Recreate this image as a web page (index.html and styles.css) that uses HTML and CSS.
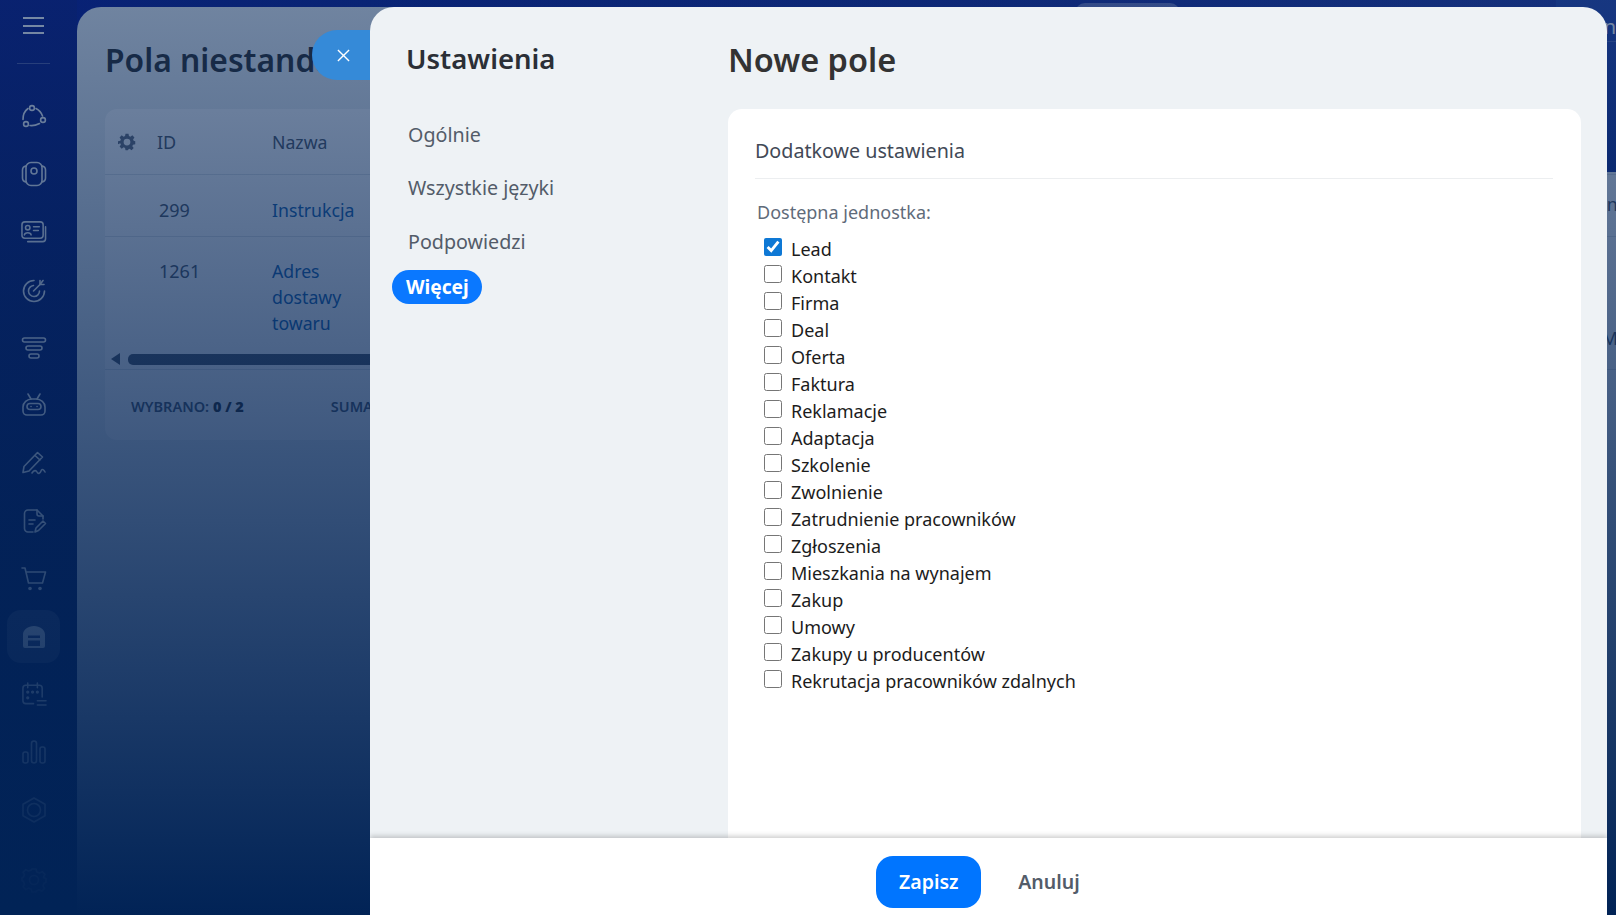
FILE: index.html
```html
<!DOCTYPE html>
<html lang="pl">
<head>
<meta charset="UTF-8" />
<meta name="viewport" content="width=device-width, initial-scale=1" />
<title>Nowe pole</title>
<link rel="stylesheet" href="styles.css">
</head>
<body>

<div class="page">
  <nav class="sidebar">
    <div class="burger"><i></i><i></i><i></i></div>
    <div class="side-rule"></div>
    <div class="side-icons">
      <a class="side-item"><svg viewBox="0 0 26 26"><circle cx="11" cy="4" r="2.4"/><circle cx="5" cy="20" r="2.4"/><circle cx="22" cy="16" r="2.4"/><path d="M7 4.500C3.500 7 2 11 2 15.500M15 4.500C18 6 20.500 9 21.500 12M9 21.500C12.500 22 15.500 21 18.500 19.500"/></svg></a>
      <a class="side-item"><svg viewBox="0 0 26 26"><rect x="5" y="1.500" width="16" height="23" rx="5"/><circle cx="13" cy="10" r="3"/><path d="M5 5C2.500 5.500 1.500 7 1.500 9v8c0 2 1 3.500 3.500 4M21 5c2.500.5 3.500 2 3.500 4v8c0 2-1 3.500-3.500 4"/></svg></a>
      <a class="side-item"><svg viewBox="0 0 27 26"><rect x="1" y="2.500" width="22" height="17" rx="3"/><circle cx="7" cy="8.500" r="2.300"/><path d="M3.500 16c.5-3 6.500-3 7 0M13 7.500h6M13 11.500h5M25.500 7.500v12.500a3 3 0 0 1-3 3H7"/></svg></a>
      <a class="side-item"><svg viewBox="0 0 26 26"><path d="M13 3.500A10.500 10.500 0 1 0 23.500 14"/><path d="M12.500 8.500A5.500 5.500 0 1 0 18.500 14"/><path d="M12.500 14l7-7M19 3.500v4h4"/><path d="M19 7.500l3-4"/></svg></a>
      <a class="side-item"><svg viewBox="0 0 26 26"><rect x="1.500" y="3" width="23" height="4" rx="2"/><rect x="5" y="11" width="16" height="4" rx="2"/><rect x="8" y="19" width="10" height="4" rx="2"/></svg></a>
      <a class="side-item"><svg viewBox="0 0 26 26"><path d="M7 2l3 5M19 2l-3 5"/><path d="M2 15a9 8 0 0 1 9-8h4a9 8 0 0 1 9 8v4a4 4 0 0 1-4 4H6a4 4 0 0 1-4-4z"/><rect x="6" y="11.500" width="14" height="6" rx="3"/><path d="M10 14.500h.1M16 14.500h.1"/></svg></a>
      <a class="side-item"><svg viewBox="0 0 26 26"><path d="M3 16.500L16.500 2.500l5 4.500L8 21l-6 1.500zM14 5.500l5 4.500"/><path d="M11 23c2-3 4-3 5-1s3 2 4-1 3-1 4 1"/></svg></a>
      <a class="side-item"><svg viewBox="0 0 26 26"><path d="M12 24H7a3.500 3.500 0 0 1-3.500-3.500v-15A3.500 3.500 0 0 1 7 2h9l6 6v3"/><path d="M16 2v4a2 2 0 0 0 2 2h4M8 12h6M8 16h4M14 24l1-4 7-7 2.500 2.500-7 7z"/></svg></a>
      <a class="side-item"><svg viewBox="0 0 26 26"><path d="M1 2h3l3.500 15h14L24.500 6H5"/><circle cx="9" cy="22.500" r="1.800" class="solid"/><circle cx="19" cy="22.500" r="1.800" class="solid"/></svg></a>
      <a class="side-item active"><svg viewBox="0 0 26 26"><path class="solid" d="M2 10.500C2 6 7 2 13 2s11 4 11 8.500V22a2 2 0 0 1-2 2H4a2 2 0 0 1-2-2zM7 11.500v2.500h12v-2.500zM7 16.500V22h12v-5.500z"/></svg></a>
      <a class="side-item"><svg viewBox="0 0 27 26"><path d="M13 23H5a3 3 0 0 1-3-3V7a3 3 0 0 1 3-3h14a3 3 0 0 1 3 3v9M7 1.500v5M17 1.500v5M17 20h9M17 24.500h9"/><circle cx="7" cy="11" r=".9"/><circle cx="12" cy="11" r=".9"/><circle cx="17" cy="11" r=".9"/><circle cx="7" cy="17" r=".9"/></svg></a>
      <a class="side-item"><svg viewBox="0 0 26 26"><rect x="2" y="13" width="5" height="11" rx="2"/><rect x="10.500" y="2" width="5" height="22" rx="2.500"/><rect x="19" y="8" width="5" height="16" rx="2"/></svg></a>
      <a class="side-item"><svg viewBox="0 0 26 26"><path d="M13 1l11 6.200v11.600L13 25 2 18.800V7.200z"/><circle cx="13" cy="13" r="6.500"/></svg></a>
      <a class="side-item gear"><svg viewBox="0 0 26 26"><path d="M11 2h4l.8 3 2.700 1.100 2.700-1.500 2.800 2.800-1.500 2.700L23 10.800l2 1v3.400l-2 1-1 2.600 1.500 2.700-2.800 2.800-2.700-1.500-2.700 1.100L15 25h-4l-.8-2.800-2.700-1.100-2.700 1.500L2 19.800l1.500-2.700-1-2.600-1.500-1V11l1.500-1 1-2.400L2 5.400l2.800-2.800 2.700 1.500 2.700-1.100z"/><circle cx="13" cy="13" r="4.500"/></svg></a>
    </div>
  </nav>

  <main class="content">
    <h2 class="content-title">Pola niestandardowe</h2>
    <section class="table-card">
      <div class="t-row t-head">
        <svg class="cog" viewBox="0 0 24 24"><path d="M10 1h4l.6 3.100 1.900.8 2.600-1.800 2.800 2.800-1.800 2.600.8 1.900L23 11v4l-3.100.6-.8 1.900 1.800 2.600-2.800 2.800-2.600-1.800-1.900.8L13 23h-3l-.6-3.100-1.900-.8-2.600 1.800-2.800-2.800 1.800-2.600-.8-1.900L0 15v-4l3.100-.6.800-1.900-1.800-2.600 2.800-2.800 2.600 1.800 1.900-.8zM12 7.500a4.500 4.500 0 1 0 0 9 4.500 4.500 0 0 0 0-9z" fill-rule="evenodd"/></svg>
        <span class="c-id">ID</span><span class="c-name">Nazwa</span>
      </div>
      <div class="t-row t-body">
        <span class="c-id num">299</span><a class="c-name">Instrukcja</a>
      </div>
      <div class="t-row t-last">
        <span class="c-id num">1261</span><a class="c-name">Adres dostawy towaru</a>
      </div>
      <div class="t-scroll"><i class="arrow"></i><i class="thumb"></i></div>
      <div class="t-foot"><span>WYBRANO: <b>0 / 2</b></span><span class="suma">SUMA</span></div>
    </section>
  </main>

  <div class="top-widget"><span class="tab"></span><span class="corner-text">in</span></div>
  <span class="peek peek-a">tin</span>
  <span class="peek peek-b">M</span>
</div>

<div class="overlay"></div>

<a class="close-tab"><svg viewBox="0 0 14 14"><path d="M1 1l12 12M13 1L1 13"/></svg></a>

<aside class="slider">
  <div class="slider-body">
    <div class="slider-nav">
      <h2>Ustawienia</h2>
      <a>Ogólnie</a>
      <a>Wszystkie języki</a>
      <a>Podpowiedzi</a>
      <a class="current">Więcej</a>
    </div>
    <div class="slider-main">
      <h1>Nowe pole</h1>
      <div class="form-card">
        <div class="form-title">Dodatkowe ustawienia</div>
        <div class="form-label">Dostępna jednostka:</div>
        <label class="check"><input type="checkbox" checked><span>Lead</span></label>
        <label class="check"><input type="checkbox"><span>Kontakt</span></label>
        <label class="check"><input type="checkbox"><span>Firma</span></label>
        <label class="check"><input type="checkbox"><span>Deal</span></label>
        <label class="check"><input type="checkbox"><span>Oferta</span></label>
        <label class="check"><input type="checkbox"><span>Faktura</span></label>
        <label class="check"><input type="checkbox"><span>Reklamacje</span></label>
        <label class="check"><input type="checkbox"><span>Adaptacja</span></label>
        <label class="check"><input type="checkbox"><span>Szkolenie</span></label>
        <label class="check"><input type="checkbox"><span>Zwolnienie</span></label>
        <label class="check"><input type="checkbox"><span>Zatrudnienie pracowników</span></label>
        <label class="check"><input type="checkbox"><span>Zgłoszenia</span></label>
        <label class="check"><input type="checkbox"><span>Mieszkania na wynajem</span></label>
        <label class="check"><input type="checkbox"><span>Zakup</span></label>
        <label class="check"><input type="checkbox"><span>Umowy</span></label>
        <label class="check"><input type="checkbox"><span>Zakupy u producentów</span></label>
        <label class="check"><input type="checkbox"><span>Rekrutacja pracowników zdalnych</span></label>
      </div>
    </div>
  </div>
  <footer class="slider-foot">
    <button class="btn-save">Zapisz</button>
    <button class="btn-cancel">Anuluj</button>
  </footer>
</aside>

</body>
</html>
```

FILE: styles.css
```css
* {
  box-sizing: border-box;
}
html, body {
  height: 100%;
}
body {
  margin: 0;
  overflow: hidden;
  font-family: "Noto Sans", "Open Sans", sans-serif;
  background: #12288e;
  color: #333;
}
a {
  text-decoration: none;
}

/* page under the slider */
.page {
  display: flex;
  height: 915px;
  background: linear-gradient(90deg, #0f1f96 0%, #1c2f9c 60%, #2b40a6 100%);
}
.sidebar {
  width: 77px;
  flex-shrink: 0;
  padding-right: 10px;
  color: #fff;
  background: linear-gradient(#12208c, #0a1c5c 60%);
}
.burger {
  display: flex;
  flex-direction: column;
  gap: 5.500px;
  width: 21px;
  margin: 17px auto 0;
}
.burger i {
  display: block;
  height: 2px;
  background: #fff;
}
.side-rule {
  width: 33px;
  height: 1px;
  margin: 29px auto 0;
  background: rgba(255,255,255,.3);
}
.side-icons {
  display: flex;
  flex-direction: column;
  align-items: center;
  margin-top: 26px;
  gap: 4.800px;
}
.side-item {
  display: flex;
  align-items: center;
  justify-content: center;
  width: 53px;
  height: 53px;
  border-radius: 14px;
}
.side-item svg {
  width: 26px;
  height: 26px;
  fill: none;
  stroke: currentColor;
  stroke-width: 1.600;
  stroke-linecap: round;
  stroke-linejoin: round;
}
.side-item .solid {
  fill: currentColor;
  stroke: none;
}
.side-item.active {
  background: rgba(255,255,255,.2);
}
.side-item.gear {
  margin-top: 12px;
}
.content {
  flex: 1;
  min-width: 0;
  margin-top: 7px;
  padding: 30px 0 0 28px;
  border-radius: 24px 0 0 0;
  background: #eef2f4;
  overflow: hidden;
}
.content-title {
  margin: 0 0 26px;
  font-size: 31.800px;
  line-height: 46px;
  font-weight: 600;
  white-space: nowrap;
  color: #333;
}
.table-card {
  width: 1600px;
  background: #fff;
  border-radius: 12px;
  font-size: 18px;
  color: #535c69;
}
.t-row {
  display: flex;
  align-items: center;
  height: 62px;
  border-bottom: 1px solid #dfe3e8;
}
.t-head {
  position: relative;
  height: 66px;
}
.t-body {
  padding-top: 9px;
}
.cog {
  position: absolute;
  left: 13px;
  top: 24px;
  width: 18px;
  height: 18px;
  fill: #6b7280;
}
.c-id {
  margin-left: 52px;
  width: 115px;
  line-height: 26px;
}
.c-id.num {
  margin-left: 54px;
  width: 113px;
}
.c-name {
  width: 90px;
  line-height: 26px;
  font-size: 17.700px;
  color: #2067b0;
}
.t-head .c-name {
  color: #535c69;
}
.t-last {
  align-items: flex-start;
  height: 113px;
  padding-top: 21px;
  border-bottom: 0;
}
.t-scroll {
  display: flex;
  align-items: center;
  gap: 8px;
  height: 14px;
  padding-left: 6px;
  margin-top: 2px;
}
.arrow {
  width: 0;
  height: 0;
  border-style: solid;
  border-width: 6px 9px 6px 0;
  border-color: transparent #535c69 transparent transparent;
}
.thumb {
  display: block;
  width: 1400px;
  height: 11px;
  border-radius: 5px;
  background: #535c69;
}
.t-foot {
  display: flex;
  align-items: center;
  height: 71px;
  margin-top: 3px;
  padding: 1px 0 0 26px;
  border-top: 1px solid #dfe3e8;
  font-size: 14.500px;
  font-weight: 600;
}
.t-foot b {
  color: #333;
}
.suma {
  margin-left: 87px;
}
.top-widget {
  position: absolute;
  top: 0;
  right: 0;
  width: 60px;
  height: 172px;
  border-top: 12px solid #2f4cb0;
  background: linear-gradient(#2f4cb0, #1a349c);
  color: #fff;
  font-size: 20px;
  line-height: 30px;
}
.corner-text {
  position: absolute;
  right: 0;
  top: 0;
  height: 30px;
  padding-left: 4px;
  border-bottom: 1px solid rgba(255,255,255,.2);
  width: 100%;
  text-align: right;
}
.tab {
  position: absolute;
  top: -9px;
  right: 436px;
  width: 105px;
  height: 20px;
  border-radius: 10px 10px 0 0;
  background: rgba(255,255,255,.35);
}
.peek {
  position: absolute;
  right: -2px;
  font-size: 18px;
  color: #535c69;
}
.peek-a {
  top: 192px;
}
.peek-b {
  top: 326px;
}

.overlay {
  position: absolute;
  inset: 0;
  background: linear-gradient(rgba(1,35,86,.53), rgba(1,35,86,1));
}

.close-tab {
  position: absolute;
  left: 312px;
  top: 30px;
  display: flex;
  align-items: center;
  width: 70px;
  height: 50px;
  padding-left: 25px;
  border-radius: 25px 0 0 25px;
  background: #358ad8;
}
.close-tab svg {
  width: 13px;
  height: 13px;
  fill: none;
  stroke: #fff;
  stroke-width: 1.500;
}

/* slider */
.slider {
  position: absolute;
  left: 370px;
  top: 7px;
  bottom: 0;
  width: 1237px;
  display: flex;
  flex-direction: column;
  border-radius: 24px 24px 0 0;
  background: #eef2f5;
  overflow: hidden;
}
.slider-body {
  flex: 1;
  min-height: 0;
  display: flex;
  overflow: hidden;
}
.slider-nav {
  display: flex;
  flex-direction: column;
  align-items: flex-start;
  width: 358px;
  flex-shrink: 0;
  padding: 34px 0 0 22px;
}
.slider-nav h2 {
  margin: 0 0 41px 14px;
  font-size: 27.500px;
  line-height: 36px;
  font-weight: 600;
  color: #2b2f36;
}
.slider-nav a {
  padding: 0 14px 0 16px;
  margin-bottom: 19px;
  font-size: 19.700px;
  line-height: 34px;
  color: #535c69;
}
.slider-nav a:nth-of-type(3) {
  margin-top: 1px;
}
.slider-nav a.current {
  margin-top: -8px;
  padding: 0 13px 0 14px;
  border-radius: 17px;
  background: #0a78ff;
  color: #fff;
  font-weight: 700;
  font-size: 19.200px;
}
.slider-main {
  flex: 1;
  min-width: 0;
  padding-right: 26px;
}
.slider-main h1 {
  margin: 28px 0 25px;
  font-size: 32.500px;
  line-height: 49px;
  font-weight: 600;
  color: #333;
}
.form-card {
  min-height: 760px;
  padding: 28px 28px 0;
  border-radius: 14px;
  background: #fff;
}
.form-title {
  padding: 1px 0 14px;
  margin-left: -1px;
  border-bottom: 1px solid #eceef0;
  font-size: 19.700px;
  line-height: 26px;
  color: #424956;
}
.form-label {
  margin: 21px 0 12px 1px;
  font-size: 18px;
  line-height: 24px;
  color: #5f6b7a;
}
.check {
  display: flex;
  align-items: flex-start;
  height: 27px;
  padding-left: 8px;
  font-size: 18px;
  line-height: 27px;
  color: #1c1c1c;
}
.check input {
  width: 18px;
  height: 18px;
  margin: 2px 9px 0 0;
  accent-color: #0e78d5;
}
.slider-foot {
  display: flex;
  align-items: center;
  justify-content: center;
  gap: 37px;
  flex-shrink: 0;
  height: 77px;
  padding: 0 21px 0 0;
  background: #fff;
  box-shadow: 0 -2px 5px rgba(0,0,0,.2);
  position: relative;
}
.btn-save {
  width: 105px;
  height: 52px;
  margin-top: 10px;
  border: 0;
  border-radius: 17px;
  background: #0075ff;
  color: #fff;
  font: 600 19.500px "Noto Sans", sans-serif;
}
.btn-cancel {
  margin-top: 10px;
  padding: 0;
  border: 0;
  background: none;
  color: #535c69;
  font: 600 19.500px "Noto Sans", sans-serif;
}
```
